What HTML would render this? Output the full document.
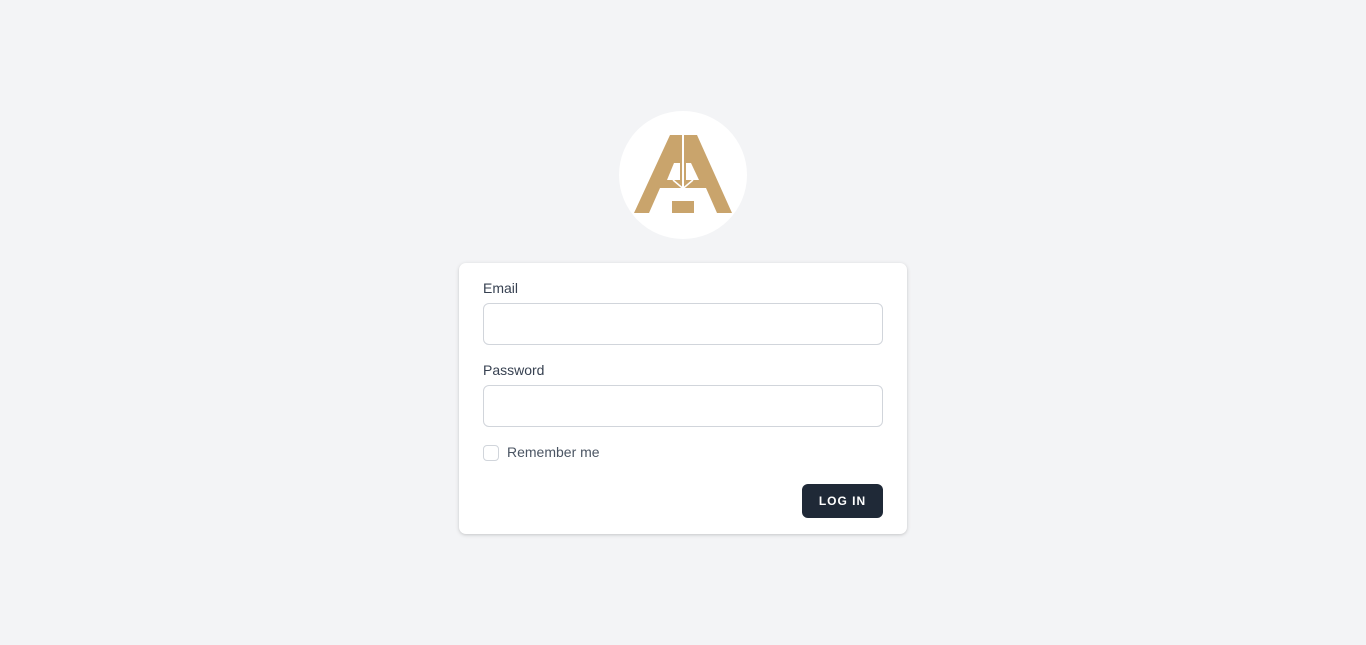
<!DOCTYPE html>
<html><head><style>
body{margin:0;background:#f3f4f6;font-family:"Liberation Sans",sans-serif;width:1366px;height:645px;position:relative;overflow:hidden}
.logo{position:absolute;left:619px;top:111px;width:128px;height:128px;border-radius:50%;background:#fff}
.card{position:absolute;left:459px;top:263px;width:448px;height:271px;background:#fff;border-radius:7px;box-shadow:0 1px 4px rgba(0,0,0,.14),0 1px 2px rgba(0,0,0,.06)}
label{position:absolute;left:24px;font-size:14px;color:#374151}
.in{position:absolute;left:24px;width:398px;height:40px;border:1px solid #d1d5db;border-radius:6px}
.cb{position:absolute;left:24px;top:182px;width:14px;height:14px;border:1px solid #d1d5db;border-radius:4px}
.rm{position:absolute;left:48px;top:181px;font-size:14px;color:#4b5563}
.btn{position:absolute;left:343px;top:221px;width:81px;height:34px;background:#1f2937;border-radius:6px;color:#fff;font-size:12px;font-weight:bold;letter-spacing:1px;text-align:center;line-height:34px}
</style></head><body>
<div class="logo"><svg width="128" height="128" viewBox="619 111 128 128">
<g fill="#c9a46c">
<polygon points="670,135 682,135 682,188 660,188 649,213 634,213"/>
<polygon points="684,135 697,135 732,213 717,213 706,188 684,188"/>
<rect x="672" y="201" width="22" height="12"/>
</g>
<g fill="#fff">
<polygon points="674,163 680,163 680,180 667,180"/>
<polygon points="686,163 691,163 699,180 686,180"/>
</g>
<g stroke="#fff" stroke-width="1.5" fill="none">
<line x1="683" y1="135" x2="683" y2="200"/>
<line x1="673" y1="180" x2="693" y2="197"/>
<line x1="693" y1="180" x2="673" y2="197"/>
</g>
</svg></div>
<div class="card">
<label style="top:17px">Email</label>
<div class="in" style="top:40px"></div>
<label style="top:99px">Password</label>
<div class="in" style="top:122px"></div>
<div class="cb"></div><div class="rm">Remember me</div>
<div class="btn">LOG IN</div>
</div>
</body></html>
